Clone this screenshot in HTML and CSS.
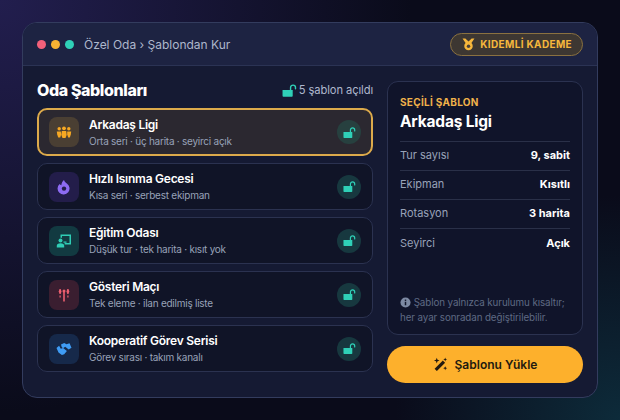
FILE: index.html
```html
<!DOCTYPE html>
<html lang="tr">
<head>
    <meta charset="UTF-8">
    <title>Oda Şablonları</title>
    <link rel="stylesheet" href="styles.css">
</head>
<body>
    <div class="window">
        <!-- Üst bar -->
        <div class="topbar">
            <div class="dots">
                <span class="dot dot-red"></span>
                <span class="dot dot-yellow"></span>
                <span class="dot dot-green"></span>
            </div>
            <div class="crumb">Özel Oda › Şablondan Kur</div>
            <div class="tier">
                <svg class="tier-icon" viewBox="0 0 12 12"><path d="M0.5 0.5h2.6L6 3.2 8.900 0.500h2.600L8.700 4.700A3.900 3.900 0 1 1 3.300 4.700Z" fill="#f6b73c"/><circle cx="6" cy="7.700" r="1.600" fill="#4a4038"/></svg>
                KIDEMLİ KADEME
            </div>
        </div>

        <div class="content">
            <!-- Sol kolon -->
            <div class="left">
                <div class="left-head">
                    <h1>Oda Şablonları</h1>
                    <div class="unlocked">
                        <svg class="lock-big" viewBox="0 0 14 14"><use href="#lock"/></svg>
                        5 şablon açıldı
                    </div>
                </div>
                <div class="list">
                    <div class="item item-active">
                        <div class="thumb thumb-gold">
                            <svg viewBox="0 0 16 16" fill="#f6a823"><circle cx="3.200" cy="4.800" r="1.700"/><circle cx="8" cy="4.300" r="1.900"/><circle cx="12.800" cy="4.800" r="1.700"/><path d="M0.800 7.400h4l0.400 3-1 3H2.200l-1-3Z"/><path d="M5.800 7h4.400l0.500 4-1.200 3H6.500l-1.200-3Z"/><path d="M11.200 7.400h4l-0.400 3-1 3h-1.600l-1-3Z"/></svg>
                        </div>
                        <div class="item-text">
                            <div class="item-title">Arkadaş Ligi</div>
                            <div class="item-sub">Orta seri · üç harita · seyirci açık</div>
                        </div>
                        <div class="lock-badge"><svg viewBox="0 0 14 14"><use href="#lock"/></svg></div>
                    </div>
                    <div class="item">
                        <div class="thumb thumb-purple">
                            <svg viewBox="0 0 16 16"><path d="M8 1c0.600 1.800 1.500 2.300 2.800 3.500A6 6 0 1 1 3.600 5c0.500 0.600 1 1 1.700 1.200C5.500 4.200 6.500 2.200 8 1Z" fill="#8d6bf2"/><circle cx="8" cy="9.600" r="2.200" fill="#231d4a"/></svg>
                        </div>
                        <div class="item-text">
                            <div class="item-title">Hızlı Isınma Gecesi</div>
                            <div class="item-sub">Kısa seri · serbest ekipman</div>
                        </div>
                        <div class="lock-badge"><svg viewBox="0 0 14 14"><use href="#lock"/></svg></div>
                    </div>
                    <div class="item">
                        <div class="thumb thumb-teal">
                            <svg viewBox="0 0 16 16" fill="#2fcdb5"><path d="M4.500 1.500h10.500v10H8.600v-1.500h4.900V3H6v1.800H4.500Z"/><circle cx="4.500" cy="7.600" r="2"/><path d="M0.800 14.500v-1.800c0-1.500 1.200-2.400 3.700-2.400s3.700 0.900 3.700 2.400v1.800Z"/><path d="M7.500 8.500h3v1.300h-3Z"/></svg>
                        </div>
                        <div class="item-text">
                            <div class="item-title">Eğitim Odası</div>
                            <div class="item-sub">Düşük tur · tek harita · kısıt yok</div>
                        </div>
                        <div class="lock-badge"><svg viewBox="0 0 14 14"><use href="#lock"/></svg></div>
                    </div>
                    <div class="item">
                        <div class="thumb thumb-red">
                            <svg viewBox="0 0 16 16" fill="#ec5f6f"><rect x="7.200" y="5" width="1.600" height="9.500"/><circle cx="8" cy="4" r="1.500"/><path d="M3.500 2h1.200l0.800 2.500-0.800 2.500H3.500l-0.800-2.500Z"/><path d="M11.300 2h1.200l0.800 2.500-0.800 2.500h-1.200l-0.800-2.500Z"/><rect x="3.500" y="8.500" width="1.200" height="2"/><rect x="11.300" y="8.500" width="1.200" height="2"/></svg>
                        </div>
                        <div class="item-text">
                            <div class="item-title">Gösteri Maçı</div>
                            <div class="item-sub">Tek eleme · ilan edilmiş liste</div>
                        </div>
                        <div class="lock-badge"><svg viewBox="0 0 14 14"><use href="#lock"/></svg></div>
                    </div>
                    <div class="item">
                        <div class="thumb thumb-blue">
                            <svg viewBox="0 0 16 16" fill="#3f9cf5"><path d="M5 3.500l3.200-1.400 2.300 1.200 3-1 2 4.500-2.800 1.800-3.500-2.800-2.200 1.400-1.300-1.200Z"/><path d="M0.500 7l2.600-2.200 1.700 2.900 2.300-0.700 3.800 3-2.700 3.300-2.300 0.700-3.400-2.400Z"/></svg>
                        </div>
                        <div class="item-text">
                            <div class="item-title">Kooperatif Görev Serisi</div>
                            <div class="item-sub">Görev sırası · takım kanalı</div>
                        </div>
                        <div class="lock-badge"><svg viewBox="0 0 14 14"><use href="#lock"/></svg></div>
                    </div>
                </div>
            </div>

            <!-- Sağ kolon -->
            <div class="right">
                <div class="panel">
                    <div class="eyebrow">SEÇİLİ ŞABLON</div>
                    <div class="panel-title">Arkadaş Ligi</div>
                    <div class="rows">
                        <div class="row"><span>Tur sayısı</span><b>9, sabit</b></div>
                        <div class="row"><span>Ekipman</span><b>Kısıtlı</b></div>
                        <div class="row"><span>Rotasyon</span><b>3 harita</b></div>
                        <div class="row"><span>Seyirci</span><b>Açık</b></div>
                    </div>
                    <div class="note">
                        <svg class="info" viewBox="0 0 12 12"><circle cx="6" cy="6" r="5.500" fill="#7d8aa3"/><rect x="5.200" y="5.200" width="1.600" height="3.800" fill="#12172b"/><rect x="5.200" y="2.800" width="1.600" height="1.500" fill="#12172b"/></svg>
                        Şablon yalnızca kurulumu kısaltır;<br>her ayar sonradan değiştirilebilir.
                    </div>
                </div>
                <button class="load">
                    <svg viewBox="0 0 16 16" fill="#231a10"><path d="M10.500 3.800l2.400 2.400-8.800 8.800-2.400-2.400Z"/><path d="M4 0.800l0.800 2.200 2.200 0.800-2.200 0.800-0.800 2.200-0.800-2.200L1 3.800l2.200-0.800Z"/><path d="M13 0.500l0.600 1.500 1.500 0.600-1.500 0.600-0.600 1.500-0.600-1.500-1.500-0.600 1.500-0.600Z"/><path d="M13 9.800l0.600 1.500 1.500 0.600-1.500 0.600-0.600 1.500-0.600-1.500-1.500-0.600 1.500-0.600Z"/></svg>
                    Şablonu Yükle
                </button>
            </div>
        </div>
    </div>

    <svg class="defs" width="0" height="0">
        <symbol id="lock" viewBox="0 0 14 14">
            <path d="M0.500 6.500h9.500v5.500a0.800 0.800 0 0 1-0.800 0.800H1.300a0.800 0.800 0 0 1-0.800-0.800Z" fill="currentColor"/>
            <path d="M8 6.500V4.300a2.300 2.300 0 0 1 4.600 0V5.300" fill="none" stroke="currentColor" stroke-width="1.300" stroke-linecap="round"/>
        </symbol>
    </svg>
</body>
</html>
```

FILE: styles.css
```css
html, body {
    margin: 0;
    height: 100%;
}

body {
    width: 620px;
    height: 420px;
    overflow: hidden;
    box-sizing: border-box;
    padding: 22px;
    background:
        radial-gradient(circle at 0% 0%, #221e4e 0%, rgba(34, 30, 78, 0) 55%),
        radial-gradient(circle at 100% 100%, #0d2b3a 0%, rgba(13, 43, 58, 0) 30%),
        #0a0b1a;
    font-family: "Inter", "Noto Sans", sans-serif;
    color: #fff;
}

.defs {
    position: absolute;
}

.window {
    height: 376px;
    box-sizing: border-box;
    border: 1px solid #333c5e;
    border-radius: 15px;
    background: #151a33;
    overflow: hidden;
}

.topbar {
    height: 43px;
    box-sizing: border-box;
    display: flex;
    align-items: center;
    padding: 0 14px;
    background: #1d2342;
    border-bottom: 1px solid #2b3354;
}

.dots {
    display: flex;
    gap: 5px;
}

.dot {
    width: 9px;
    height: 9px;
    border-radius: 50%;
}

.dot-red { background: #f3607a; }
.dot-yellow { background: #f9b233; }
.dot-green { background: #2fd0b7; }

.crumb {
    margin-left: 10px;
    font-size: 12px;
    color: #aeb7cc;
}

.tier {
    margin-left: auto;
    height: 23px;
    box-sizing: border-box;
    display: flex;
    align-items: center;
    gap: 5px;
    padding: 0 10px 0 11px;
    border: 1px solid #8a7140;
    border-radius: 12px;
    background: #3d3732;
    color: #f6b73c;
    font-size: 10px;
    font-weight: 700;
    letter-spacing: 0.35px;
}

.tier-icon {
    width: 13px;
    height: 13px;
}

.content {
    display: flex;
    gap: 14px;
    padding: 15px 14px 0;
}

.left {
    width: 336px;
}

.left-head {
    height: 18px;
    display: flex;
    align-items: center;
    justify-content: space-between;
    margin-bottom: 9px;
}

h1 {
    margin: 0;
    font-size: 16px;
    font-weight: 800;
    letter-spacing: -0.4px;
}

.unlocked {
    display: flex;
    align-items: center;
    gap: 2px;
    font-size: 11.2px;
    letter-spacing: -0.1px;
    color: #aeb7cc;
}

.lock-big {
    width: 15px;
    height: 15px;
    color: #2fd0b7;
}

.list {
    display: flex;
    flex-direction: column;
    gap: 7px;
}

.item {
    height: 47px;
    box-sizing: border-box;
    display: flex;
    align-items: center;
    padding: 0 11px;
    border: 1px solid #2b3250;
    border-radius: 10px;
    background: #101427;
}

.item-active {
    height: 48px;
    border: 2px solid #dcaa4b;
    padding: 0 10px;
    background: #2b2830;
}

.thumb {
    width: 30px;
    height: 30px;
    border-radius: 8px;
    display: flex;
    align-items: center;
    justify-content: center;
}

.thumb svg {
    width: 16px;
    height: 16px;
}

.thumb-gold { background: #4a3f33; }
.thumb-purple { background: #231d4a; }
.thumb-teal { background: #123a41; }
.thumb-red { background: #3a1e30; }
.thumb-blue { background: #16294a; }

.item-text {
    margin-left: 10px;
    flex: 1;
}

.item-title {
    font-size: 12px;
    font-weight: 600;
    line-height: 16px;
    letter-spacing: -0.25px;
}

.item-sub {
    font-size: 10px;
    line-height: 14px;
    letter-spacing: -0.25px;
    color: #98a2b8;
    margin-top: 1px;
}

.lock-badge {
    width: 24px;
    height: 24px;
    border-radius: 50%;
    background: #17383f;
    color: #2fd0b7;
    display: flex;
    align-items: center;
    justify-content: center;
}

.item-active .lock-badge {
    background: #27403f;
}

.lock-badge svg {
    width: 13px;
    height: 13px;
}

.right {
    width: 196px;
    display: flex;
    flex-direction: column;
    gap: 11px;
}

.panel {
    height: 254px;
    box-sizing: border-box;
    padding: 14px 12px 0;
    border: 1px solid #2b3250;
    border-radius: 11px;
    background: #10142a;
}

.eyebrow {
    font-size: 10px;
    font-weight: 700;
    letter-spacing: 0.3px;
    line-height: 12px;
    color: #f0b24a;
}

.panel-title {
    margin-top: 4px;
    font-size: 15.5px;
    font-weight: 700;
    line-height: 20px;
    letter-spacing: -0.2px;
}

.rows {
    margin-top: 9px;
    border-top: 1px solid #2a3048;
}

.row {
    height: 29px;
    box-sizing: border-box;
    padding-bottom: 2px;
    display: flex;
    align-items: center;
    justify-content: space-between;
    border-bottom: 1px solid #2a3048;
    font-size: 11px;
    color: #98a2b8;
}

.row:last-child {
    border-bottom: 0;
}

.row b {
    font-weight: 700;
    color: #fff;
    font-size: 11px;
}

.note {
    margin-top: 37px;
    font-size: 9.8px;
    line-height: 15px;
    letter-spacing: -0.1px;
    color: #5f6a84;
}

.info {
    width: 11px;
    height: 11px;
    vertical-align: -1.5px;
}

.load {
    height: 37px;
    border: 0;
    border-radius: 19px;
    background: #fdb02c;
    color: #231a10;
    font-family: inherit;
    font-size: 12px;
    font-weight: 600;
    display: flex;
    align-items: center;
    justify-content: center;
    gap: 7px;
}

.load svg {
    width: 15px;
    height: 15px;
}
```
